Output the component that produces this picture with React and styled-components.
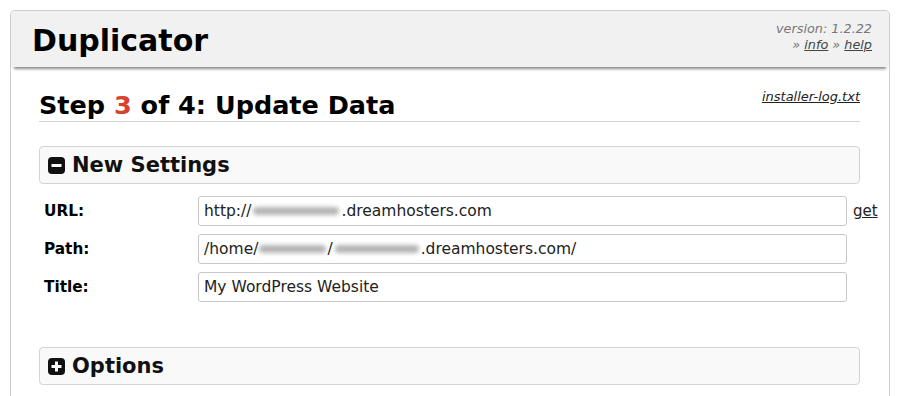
import styled, { createGlobalStyle } from "styled-components";

const Global = createGlobalStyle`
  body {
    margin: 0;
    background: #fff;
    font-family: "DejaVu Sans", Verdana, sans-serif;
    color: #000;
  }
`;

const Page = styled.div`
  padding: 10px 10px 0 10px;
  width: 900px;
  height: 396px;
  box-sizing: border-box;
  overflow: hidden;
`;

const Box = styled.div`
  border: 1px solid #cdcdcd;
  border-radius: 5px;
  height: 420px;
  box-sizing: border-box;
`;

const Header = styled.div`
  display: flex;
  align-items: center;
  justify-content: space-between;
  height: 56px;
  background: #f1f1f1;
  border-radius: 5px 5px 0 0;
  box-shadow: 0 5px 3px -3px #888;
  padding: 0 17px 0 21px;
`;

const Logo = styled.div`
  font-size: 30px;
  font-weight: bold;
  padding-top: 2px;
`;

const Version = styled.div`
  color: #777;
  font-size: 12.8px;
  font-style: italic;
  text-align: right;
  line-height: 16px;
  margin-top: -4px;
  a {
    color: #444;
    text-decoration: underline;
  }
`;

const Content = styled.div`
  padding: 0 29px 0 28px;
`;

const Heading = styled.div`
  display: flex;
  align-items: flex-end;
  justify-content: space-between;
  margin-top: 15px;
  padding-bottom: 1px;
  border-bottom: 1px solid #d3d3d3;
  font-size: 25.5px;
  font-weight: bold;
  line-height: 30px;
`;

const Step = styled.span`
  color: #d9412f;
`;

const LogLink = styled.a`
  font-size: 13px;
  font-weight: normal;
  font-style: italic;
  color: #222;
  text-decoration: underline;
  margin-bottom: 8px;
`;

const Section = styled.div`
  display: flex;
  align-items: center;
  gap: 7px;
  height: 36px;
  margin-top: ${({ $top }) => $top}px;
  padding: 0 8px;
  background: #f9f9f9;
  border: 1px solid #d3d3d3;
  border-radius: 4px;
  font-size: 21px;
  font-weight: bold;
  color: #111;
`;

const Rows = styled.div`
  display: grid;
  grid-template-columns: 153px 649px auto;
  column-gap: 6px;
  row-gap: 8px;
  margin-top: 12px;
  width: 840px;
  align-items: center;
`;

const Label = styled.div`
  padding-left: 5px;
  font-size: 15.3px;
  font-weight: bold;
`;

const Field = styled.div`
  display: flex;
  align-items: center;
  height: 30px;
  box-sizing: border-box;
  border: 1px solid #c8c8c8;
  border-radius: 3px;
  padding-left: 5px;
  font-size: 15.5px;
  color: #222;
  white-space: nowrap;
`;

const Blur = styled.span`
  display: inline-block;
  width: ${({ $w }) => $w}px;
  height: 8px;
  margin: 0 ${({ $gap }) => $gap ?? 2}px;
  background: #b4b4b4;
  border-radius: 4px;
  filter: blur(2px);
`;

const Get = styled.a`
  font-size: 15px;
  color: #222;
  text-decoration: underline;
`;

const Toggle = ({ plus }) => (
  <svg width="17" height="17" viewBox="0 0 17 17">
    <rect x="0" y="0" width="17" height="17" rx="4" fill="#111" />
    <rect x="3.5" y="7" width="10" height="3" fill="#fff" />
    {plus && <rect x="7" y="3.5" width="3" height="10" fill="#fff" />}
  </svg>
);

export default function App() {
  return (
    <Page>
      <Global />
      <Box>
        <Header>
          <Logo>Duplicator</Logo>
          <Version>
            version: 1.2.22
            <br />
            » <a href="#">info</a> » <a href="#">help</a>
          </Version>
        </Header>
        <Content>
          <Heading>
            <span>
              Step <Step>3</Step> of 4: Update Data
            </span>
            <LogLink href="#">installer-log.txt</LogLink>
          </Heading>

          <Section $top={24}>
            <Toggle />
            New Settings
          </Section>

          <Rows>
            <Label>URL:</Label>
            <Field>
              http://<Blur $w={86} />.dreamhosters.com
            </Field>
            <Get href="#">get</Get>

            <Label>Path:</Label>
            <Field>
              /home/<Blur $w={67} $gap={1} />/<Blur $w={84} $gap={2} />.dreamhosters.com/
            </Field>
            <span />

            <Label>Title:</Label>
            <Field>My WordPress Website</Field>
            <span />
          </Rows>

          <Section $top={45}>
            <Toggle plus />
            Options
          </Section>
        </Content>
      </Box>
    </Page>
  );
}
